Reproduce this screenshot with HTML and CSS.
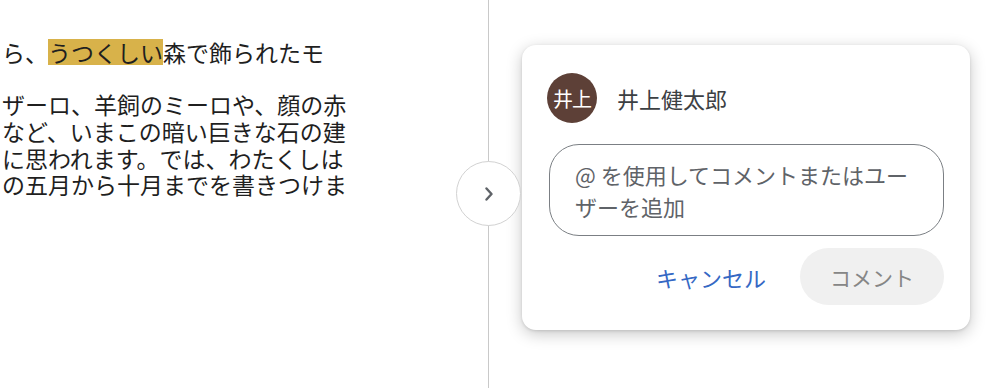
FILE: index.html
```html
<!DOCTYPE html>
<html lang="ja">
<head>
<meta charset="utf-8">
<link rel="stylesheet" href="styles.css">
</head>
<body>
<div class="page">
  <div class="doc">
    <div class="para first">
      <div class="line">ら、<span class="hl">うつくしい</span>森で飾られたモ</div>
    </div>
    <div class="para second">
      <div class="line">ザーロ、羊飼のミーロや、顔の赤</div>
      <div class="line">など、いまこの暗い巨きな石の建</div>
      <div class="line">に思われます。では、わたくしは</div>
      <div class="line">の五月から十月までを書きつけま</div>
    </div>
  </div>
  <div class="divider">
    <button class="toggle" aria-label="展開">
      <svg width="10" height="14" viewBox="0 0 10 14"><path d="M2.5 1.5 L7.5 7 L2.5 12.5" fill="none" stroke="#5f6368" stroke-width="2.4" stroke-linecap="round" stroke-linejoin="round"/></svg>
    </button>
  </div>
  <div class="side">
    <div class="card">
      <div class="user">
        <div class="avatar">井上</div>
        <div class="name">井上健太郎</div>
      </div>
      <div class="input">@ を使用してコメントまたはユー<br>ザーを追加</div>
      <div class="actions">
        <button class="cancel">キャンセル</button>
        <button class="submit">コメント</button>
      </div>
    </div>
  </div>
</div>
</body>
</html>
```

FILE: styles.css
```css
html, body {
  margin: 0;
  padding: 0;
  background: #ffffff;
}
body {
  font-family: "Noto Sans CJK JP", "Noto Sans", sans-serif;
}
.page {
  display: flex;
  width: 1000px;
  height: 388px;
  overflow: hidden;
}
.doc {
  width: 488px;
  flex: none;
  overflow: hidden;
  color: #1f1f1f;
  font-size: 23px;
}
.para {
  padding-left: 2px;
  white-space: nowrap;
}
.para.first {
  padding-top: 38px;
}
.para.first .line {
  height: 28px;
  line-height: 28px;
}
.para.second {
  padding-top: 25px;
}
.para.second .line {
  height: 26.8px;
  line-height: 26.8px;
}
.hl {
  display: inline-block;
  background: #d8b24a;
  height: 26px;
  line-height: 26px;
  vertical-align: top;
  margin-top: 1px;
}
.divider {
  width: 1px;
  flex: none;
  background: #c9c9c9;
  position: relative;
}
.toggle {
  position: absolute;
  left: -32px;
  top: 161px;
  width: 65px;
  height: 65px;
  box-sizing: border-box;
  border-radius: 50%;
  border: 1px solid #d2d2d2;
  background: #ffffff;
  padding: 0;
  display: flex;
  align-items: center;
  justify-content: center;
}
.toggle svg {
  display: block;
}
.side {
  flex: 1;
  padding-left: 33px;
  padding-top: 45px;
}
.card {
  width: 448px;
  height: 285px;
  box-sizing: border-box;
  background: #ffffff;
  border-radius: 14px;
  box-shadow: 0 4px 16px rgba(0, 0, 0, 0.22), 0 1px 3px rgba(0, 0, 0, 0.12);
  padding: 28px 26px 25px 25px;
  display: flex;
  flex-direction: column;
}
.user {
  display: flex;
  align-items: center;
  gap: 20px;
}
.avatar {
  width: 50px;
  height: 50px;
  border-radius: 50%;
  background: #5d4037;
  color: #ffffff;
  font-size: 20px;
  display: flex;
  align-items: center;
  justify-content: center;
  letter-spacing: -1px;
}
.name {
  font-size: 22px;
  color: #3c4043;
}
.input {
  margin-top: 21px;
  margin-left: 2px;
  height: 92px;
  box-sizing: border-box;
  border: 1px solid #7b7f84;
  border-radius: 30px;
  padding: 13px 20px 0 25px;
  font-size: 22px;
  line-height: 32px;
  color: #5f6368;
}
.actions {
  margin-top: 12px;
  display: flex;
  justify-content: flex-end;
  align-items: center;
  gap: 34px;
}
.cancel {
  border: none;
  background: none;
  padding: 0;
  font-family: inherit;
  font-size: 22px;
  color: #3568c4;
}
.submit {
  border: none;
  width: 144px;
  height: 57px;
  border-radius: 29px;
  background: #f0f0f0;
  font-family: inherit;
  font-size: 21px;
  color: #868686;
  padding: 0;
}
```
